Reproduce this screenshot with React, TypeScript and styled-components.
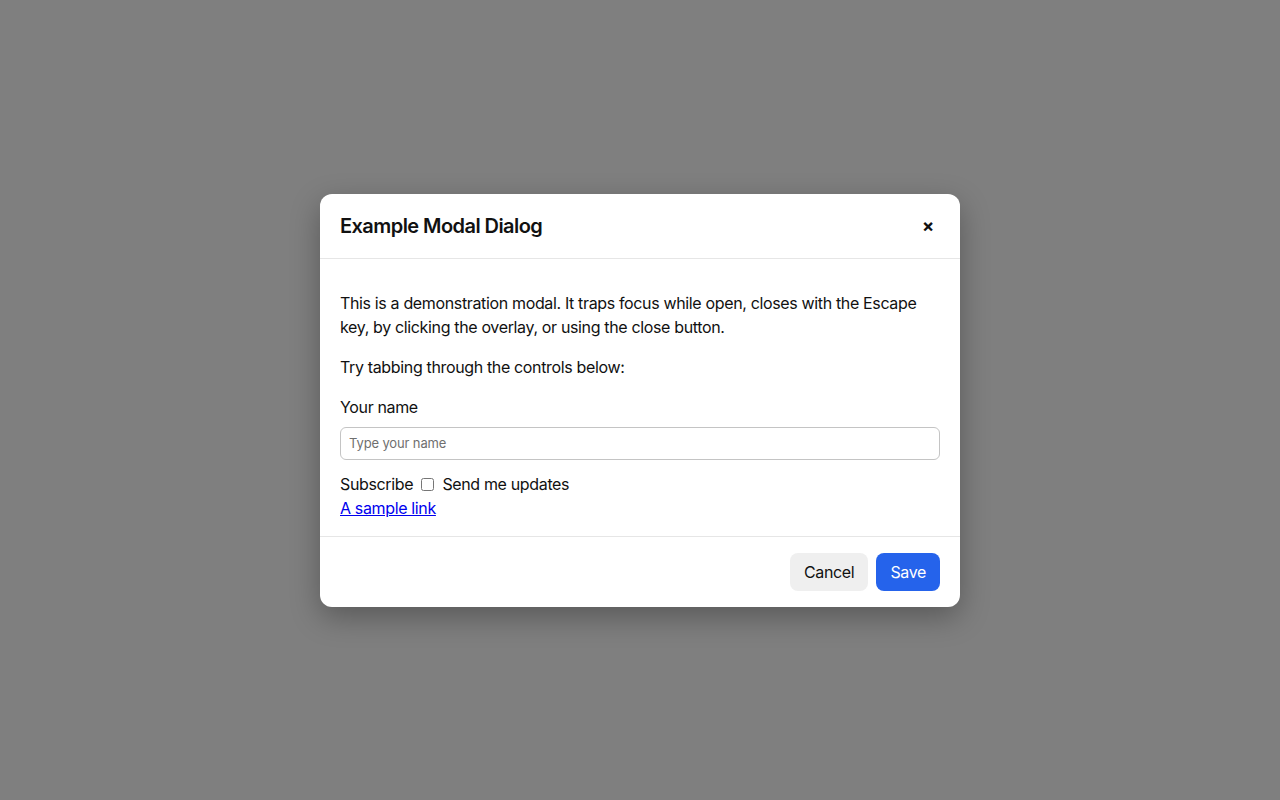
import React, { useState } from 'react';
import styled, { createGlobalStyle } from 'styled-components';

const GlobalStyle = createGlobalStyle`
  html, body {
    margin: 0;
    padding: 0;
    height: 100%;
  }
  body {
    font-family: Inter, "Liberation Sans", Arial, sans-serif;
    letter-spacing: -0.022em;
    color: #111;
  }
  #root {
    height: 100%;
  }
`;

const App: React.FC = () => {
  const [name, setName] = useState<string>('');
  const [subscribed, setSubscribed] = useState<boolean>(false);

  return (
    <>
      <GlobalStyle />
      <Overlay>
        <Modal role="dialog" aria-modal="true" aria-labelledby="modal-title">
          {/* 헤더 */}
          <Header>
            <Title id="modal-title">Example Modal Dialog</Title>
            <CloseButton aria-label="Close">×</CloseButton>
          </Header>

          {/* 본문 */}
          <Body>
            <Text>
              This is a demonstration modal. It traps focus while open, closes with the Escape key, by
              clicking the overlay, or using the close button.
            </Text>
            <Text>Try tabbing through the controls below:</Text>
            <Label htmlFor="name">Your name</Label>
            <Input
              id="name"
              placeholder="Type your name"
              value={name}
              onChange={(e) => setName(e.target.value)}
            />
            <CheckRow>
              Subscribe{' '}
              <CheckLabel>
                <Checkbox
                  type="checkbox"
                  checked={subscribed}
                  onChange={(e) => setSubscribed(e.target.checked)}
                />
                Send me updates
              </CheckLabel>
            </CheckRow>
            <SampleLink href="#">A sample link</SampleLink>
          </Body>

          {/* 하단 버튼 */}
          <Footer>
            <Button>Cancel</Button>
            <Button $primary>Save</Button>
          </Footer>
        </Modal>
      </Overlay>
    </>
  );
};

const Overlay = styled.div`
  height: 100vh;
  display: flex;
  align-items: center;
  justify-content: center;
  background-color: rgba(0, 0, 0, 0.5);
`;

const Modal = styled.div`
  width: 640px;
  background-color: #ffffff;
  border-radius: 12px;
  box-shadow: 0 10px 30px rgba(0, 0, 0, 0.3);
  display: flex;
  flex-direction: column;
`;

const Header = styled.div`
  display: flex;
  align-items: center;
  justify-content: space-between;
  height: 65px;
  box-sizing: border-box;
  padding: 0 20px;
  border-bottom: 1px solid #e6e6e6;
`;

const Title = styled.h2`
  margin: 0;
  font-size: 20px;
  font-weight: 600;
  line-height: 1.2;
  letter-spacing: -0.028em;
  color: #111;
`;

const CloseButton = styled.button`
  border: none;
  background: none;
  padding: 0;
  width: 24px;
  height: 28px;
  font-family: Inter, "Liberation Sans", Arial, sans-serif;
  font-size: 18px;
  font-weight: 700;
  line-height: 1;
  color: #111;
  cursor: pointer;
`;

const Body = styled.div`
  padding: 16px 20px;
  font-size: 16px;
  line-height: 24px;
`;

const Text = styled.p`
  margin: 16px 0;
`;

const Label = styled.label`
  display: block;
  margin-bottom: 8px;
`;

const Input = styled.input`
  display: block;
  width: 100%;
  box-sizing: border-box;
  height: 33px;
  padding: 6px 8px;
  border: 1px solid #c4c4c4;
  border-radius: 6px;
  font-family: Inter, "Liberation Sans", Arial, sans-serif;
  font-size: 13px;
  letter-spacing: -0.01em;
  color: #111;

  &::placeholder {
    color: #6f6f6f;
  }
`;

const CheckRow = styled.div`
  margin-top: 12px;
`;

const CheckLabel = styled.label`
  cursor: pointer;
`;

const Checkbox = styled.input`
  width: 13px;
  height: 13px;
  margin: 0 8px 0 4px;
  vertical-align: -1px;
`;

const SampleLink = styled.a`
  display: block;
  color: #0000ee;
  text-decoration: underline;
`;

const Footer = styled.div`
  display: flex;
  justify-content: flex-end;
  gap: 8px;
  padding: 16px 20px;
  border-top: 1px solid #e6e6e6;
`;

const Button = styled.button<{ $primary?: boolean }>`
  height: 38px;
  padding: 0 14px;
  border: none;
  border-radius: 8px;
  font-family: Inter, "Liberation Sans", Arial, sans-serif;
  font-size: 16px;
  letter-spacing: -0.022em;
  cursor: pointer;
  background-color: ${({ $primary }) => ($primary ? '#2563eb' : '#efefef')};
  color: ${({ $primary }) => ($primary ? '#ffffff' : '#111111')};
`;

export default App;
